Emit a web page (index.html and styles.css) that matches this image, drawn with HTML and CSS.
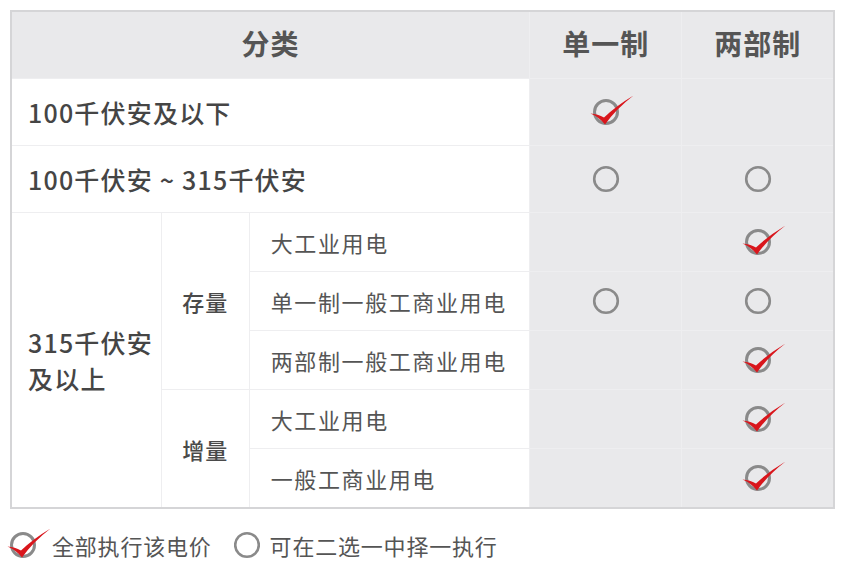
FILE: index.html
```html
<!DOCTYPE html>
<html lang="zh">
<head>
<meta charset="utf-8">
<link rel="stylesheet" href="styles.css">
</head>
<body>
<table class="tbl">
  <colgroup>
    <col class="c1"><col class="c2"><col class="c3"><col class="c4"><col class="c5">
  </colgroup>
  <thead>
    <tr class="hrow">
      <th colspan="3">分类</th>
      <th class="gray">单一制</th>
      <th class="gray">两部制</th>
    </tr>
  </thead>
  <tbody>
    <tr class="big">
      <td colspan="3" class="lbl">100千伏安及以下</td>
      <td class="gray ic"><svg class="ico" viewBox="-29 -18 58 36"><circle cx="0" cy="0" r="11.5" fill="none" stroke="#8a8a8a" stroke-width="3"/><path d="M-15.5 1.5 Q-8 2 -2 5.5 Q10 -6 27.5 -16.5 Q10 -3 -1 12.5 Q-7 5 -15.5 1.5 Z" fill="#d9161c"/></svg></td>
      <td class="gray ic"></td>
    </tr>
    <tr class="big">
      <td colspan="3" class="lbl">100千伏安 ~ 315千伏安</td>
      <td class="gray ic"><svg class="ico" viewBox="-29 -18 58 36"><circle cx="0" cy="0" r="11.8" fill="none" stroke="#8a8a8a" stroke-width="2.6"/></svg></td>
      <td class="gray ic"><svg class="ico" viewBox="-29 -18 58 36"><circle cx="0" cy="0" r="11.8" fill="none" stroke="#8a8a8a" stroke-width="2.6"/></svg></td>
    </tr>
    <tr class="sm">
      <td rowspan="5" class="lbl">315千伏安<br>及以上</td>
      <td rowspan="3" class="grp">存量</td>
      <td class="sub">大工业用电</td>
      <td class="gray ic"></td>
      <td class="gray ic"><svg class="ico" viewBox="-29 -18 58 36"><circle cx="0" cy="0" r="11.5" fill="none" stroke="#8a8a8a" stroke-width="3"/><path d="M-15.5 1.5 Q-8 2 -2 5.5 Q10 -6 27.5 -16.5 Q10 -3 -1 12.5 Q-7 5 -15.5 1.5 Z" fill="#d9161c"/></svg></td>
    </tr>
    <tr class="sm">
      <td class="sub">单一制一般工商业用电</td>
      <td class="gray ic"><svg class="ico" viewBox="-29 -18 58 36"><circle cx="0" cy="0" r="11.8" fill="none" stroke="#8a8a8a" stroke-width="2.6"/></svg></td>
      <td class="gray ic"><svg class="ico" viewBox="-29 -18 58 36"><circle cx="0" cy="0" r="11.8" fill="none" stroke="#8a8a8a" stroke-width="2.6"/></svg></td>
    </tr>
    <tr class="sm">
      <td class="sub">两部制一般工商业用电</td>
      <td class="gray ic"></td>
      <td class="gray ic"><svg class="ico" viewBox="-29 -18 58 36"><circle cx="0" cy="0" r="11.5" fill="none" stroke="#8a8a8a" stroke-width="3"/><path d="M-15.5 1.5 Q-8 2 -2 5.5 Q10 -6 27.5 -16.5 Q10 -3 -1 12.5 Q-7 5 -15.5 1.5 Z" fill="#d9161c"/></svg></td>
    </tr>
    <tr class="sm">
      <td rowspan="2" class="grp">增量</td>
      <td class="sub">大工业用电</td>
      <td class="gray ic"></td>
      <td class="gray ic"><svg class="ico" viewBox="-29 -18 58 36"><circle cx="0" cy="0" r="11.5" fill="none" stroke="#8a8a8a" stroke-width="3"/><path d="M-15.5 1.5 Q-8 2 -2 5.5 Q10 -6 27.5 -16.5 Q10 -3 -1 12.5 Q-7 5 -15.5 1.5 Z" fill="#d9161c"/></svg></td>
    </tr>
    <tr class="sm">
      <td class="sub">一般工商业用电</td>
      <td class="gray ic"></td>
      <td class="gray ic"><svg class="ico" viewBox="-29 -18 58 36"><circle cx="0" cy="0" r="11.5" fill="none" stroke="#8a8a8a" stroke-width="3"/><path d="M-15.5 1.5 Q-8 2 -2 5.5 Q10 -6 27.5 -16.5 Q10 -3 -1 12.5 Q-7 5 -15.5 1.5 Z" fill="#d9161c"/></svg></td>
    </tr>
  </tbody>
</table>
<div class="legend">
  <div class="item">
    <svg class="lico-chk" viewBox="-16 -18 45 36"><circle cx="0" cy="0" r="11.5" fill="none" stroke="#8a8a8a" stroke-width="3"/><path d="M-15.5 1.5 Q-8 2 -2 5.5 Q10 -6 27.5 -16.5 Q10 -3 -1 12.5 Q-7 5 -15.5 1.5 Z" fill="#d9161c"/></svg>
    <span>全部执行该电价</span>
  </div>
  <div class="item">
    <svg class="lico-opt" viewBox="-13 -18 26 36"><circle cx="0" cy="0" r="11.8" fill="none" stroke="#8a8a8a" stroke-width="2.6"/></svg>
    <span>可在二选一中择一执行</span>
  </div>
</div>
</body>
</html>
```
FILE: styles.css
```css
html, body {
  margin: 0;
  padding: 0;
  background: #ffffff;
}
body {
  font-family: "Noto Sans CJK SC", "Noto Sans", sans-serif;
  color: #4a4a4a;
}
.tbl {
  margin: 10px 0 0 10px;
  border-collapse: collapse;
  table-layout: fixed;
  width: 825px;
  border: 2px solid #d5d5d7;
}
.c1 { width: 150px; }
.c2 { width: 88px; }
.c3 { width: 280px; }
.c4 { width: 152px; }
.c5 { width: 152px; }
.tbl th,
.tbl td {
  border: 1px solid #eeeef0;
  padding: 0;
}
.hrow th {
  height: 61px;
  padding-bottom: 5px;
  background: #e9e9eb;
  font-size: 28px;
  font-weight: 700;
  color: #555555;
  letter-spacing: 1px;
  text-align: center;
}
.gray {
  background: #e9e9eb;
}
.big td {
  height: 66px;
}
.sm td {
  height: 58px;
}
.lbl {
  padding-left: 16px !important;
  font-size: 25px;
  font-weight: 500;
  color: #454545;
  letter-spacing: 1.2px;
  line-height: 36px;
  text-align: left;
}
.grp {
  text-align: center;
  font-size: 22px;
  font-weight: 500;
  color: #4a4a4a;
  letter-spacing: 1px;
}
.sub {
  padding-left: 21px !important;
  font-size: 22px;
  color: #555555;
  letter-spacing: 1.6px;
}
.ic {
  text-align: center;
}
.ico {
  display: block;
  width: 58px;
  height: 36px;
  margin: 0 auto;
}
.legend {
  display: flex;
  align-items: center;
  gap: 22px;
  margin: 18px 0 0 7px;
  height: 36px;
}
.item {
  display: flex;
  align-items: center;
  font-size: 22px;
  color: #555555;
  letter-spacing: 0.8px;
}
.lico-chk {
  width: 45px;
  height: 36px;
}
.lico-opt {
  width: 26px;
  height: 36px;
  margin-right: 10px;
}
```
